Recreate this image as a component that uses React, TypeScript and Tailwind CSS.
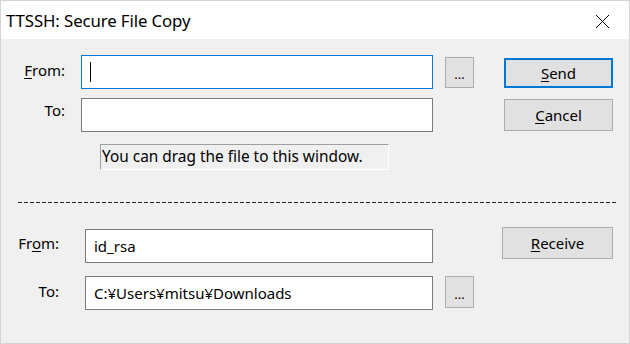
import React from "react";

const Btn = ({ children, className = "" }: { children: React.ReactNode; className?: string }) => (
  <div
    className={`flex items-center justify-center bg-[#e1e1e1] border border-[#adadad] text-black ${className}`}
  >
    {children}
  </div>
);

export default function App() {
  return (
    <div className="w-[630px] h-[344px] overflow-hidden bg-[#f0f0f0] border border-[#d4d4d4] flex flex-col font-['Noto_Sans',sans-serif] text-[15px] leading-[20px] text-black">
      {/* Title bar */}
      <div className="h-[38px] bg-white flex items-center shrink-0">
        <div className="pl-[5px] pt-[1px] text-[16.8px] tracking-[-0.1px]">TTSSH: Secure File Copy</div>
        <div className="ml-auto mr-[19px] mt-[2px]">
          <svg width="15" height="15" viewBox="0 0 15 15">
            <path d="M1 1 L14 14 M14 1 L1 14" stroke="#000" strokeWidth="1" fill="none" />
          </svg>
        </div>
      </div>

      {/* Body */}
      <div className="flex flex-col pt-[16px]">
        {/* Row 1 */}
        <div className="flex items-start h-[34px]">
          <div className="w-[64px] h-[34px] flex items-center justify-end -mt-[2px]">
            <span>
              <span className="underline underline-offset-2">F</span>rom:
            </span>
          </div>
          <div className="ml-[16px] w-[352px] h-[34px] bg-white border border-[#0078d7] flex items-center pl-[8px]">
            <span className="w-px h-[20px] bg-black" />
          </div>
          <Btn className="ml-[12px] mt-[2px] w-[29px] h-[31px] items-end pb-[6px] text-[13px] leading-none">
            ...
          </Btn>
          <div className="ml-[30px] mt-[3px] w-[109px] h-[30px] flex items-center justify-center bg-[#e1e1e1] border-2 border-[#0078d7]">
            <span>
              <span className="underline underline-offset-2">S</span>end
            </span>
          </div>
        </div>

        {/* Row 2 */}
        <div className="flex items-start h-[34px] mt-[9px]">
          <div className="w-[64px] h-[34px] flex items-center justify-end -mt-[5px]">
            <span>To:</span>
          </div>
          <div className="ml-[16px] w-[352px] h-[34px] bg-white border border-[#7a7a7a]" />
          <Btn className="ml-[71px] mt-[1px] w-[109px] h-[32px]">
            <span>
              <span className="underline underline-offset-2">C</span>ancel
            </span>
          </Btn>
        </div>

        {/* Row 3: drag hint */}
        <div className="ml-[99px] mt-[12px] w-[289px] h-[26px] border border-t-[#a0a0a0] border-l-[#a0a0a0] border-b-white border-r-white flex items-center pl-[1px]">
          <span className="text-[15.4px]">You can drag the file to this window.</span>
        </div>

        {/* Dashed separator */}
        <div className="ml-[17px] mt-[32px] w-[598px] h-px bg-[repeating-linear-gradient(90deg,#2a2a2a_0px,#2a2a2a_4px,transparent_4px,transparent_6px)]" />

        {/* Row 4 */}
        <div className="flex items-start mt-[24px]">
          <div className="w-[58px] h-[34px] mt-[2px] flex items-center justify-end -translate-y-[3px]">
            <span>
              Fr<span className="underline underline-offset-2">o</span>m:
            </span>
          </div>
          <div className="ml-[26px] mt-[2px] w-[348px] h-[34px] bg-white border border-[#7a7a7a] flex items-center pl-[8px]">
            id_rsa
          </div>
          <Btn className="ml-[69px] w-[111px] h-[32px]">
            <span>
              <span className="underline underline-offset-2">R</span>eceive
            </span>
          </Btn>
        </div>

        {/* Row 5 */}
        <div className="flex items-start mt-[13px]">
          <div className="w-[58px] h-[34px] flex items-center justify-end -translate-y-[2px]">
            <span>To:</span>
          </div>
          <div className="ml-[26px] w-[348px] h-[34px] bg-white border border-[#7a7a7a] flex items-center pl-[8px]">
            C:¥Users¥mitsu¥Downloads
          </div>
          <Btn className="ml-[12px] w-[29px] h-[32px] items-end pb-[6px] text-[13px] leading-none">
            ...
          </Btn>
        </div>
      </div>
    </div>
  );
}
